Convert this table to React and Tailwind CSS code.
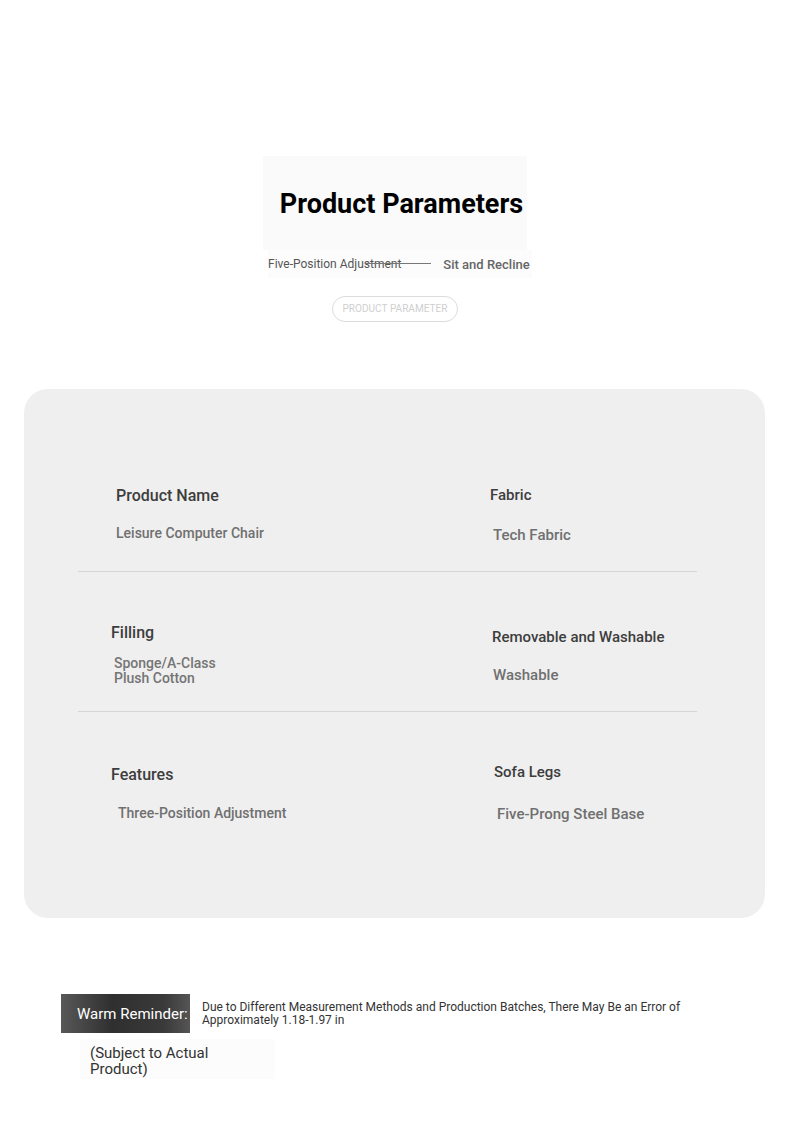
import React from 'react';

const rows = [
  {
    h: 'h-[182px]',
    left: { pt: 'pt-[97px]', lx: 'ml-[38px]', vx: 'ml-[38px]', gap: 'mt-[17px]', ls: 'text-[16px]', vs: 'text-[14px]', label: 'Product Name', value: 'Leisure Computer Chair' },
    right: { pt: 'pt-[96px]', lx: 'ml-0', vx: 'ml-[3px]', gap: 'mt-[20px]', ls: 'text-[15px]', vs: 'text-[15px]', label: 'Fabric', value: 'Tech Fabric' },
  },
  {
    h: 'h-[139px]',
    left: { pt: 'pt-[51px]', lx: 'ml-[33px]', vx: 'ml-[36px]', gap: 'mt-[13px]', ls: 'text-[16px]', vs: 'text-[14px]', label: 'Filling', value: 'Sponge/A-Class Plush Cotton', wrap: true },
    right: { pt: 'pt-[55px]', lx: 'ml-[2px]', vx: 'ml-[3px]', gap: 'mt-[18px]', ls: 'text-[15px]', vs: 'text-[15px]', label: 'Removable and Washable', value: 'Washable' },
  },
  {
    h: 'h-[206px]',
    left: { pt: 'pt-[53px]', lx: 'ml-[33px]', vx: 'ml-[40px]', gap: 'mt-[18px]', ls: 'text-[16px]', vs: 'text-[14px]', label: 'Features', value: 'Three-Position Adjustment' },
    right: { pt: 'pt-[50px]', lx: 'ml-[4px]', vx: 'ml-[7px]', gap: 'mt-[22px]', ls: 'text-[15px]', vs: 'text-[15px]', label: 'Sofa Legs', value: 'Five-Prong Steel Base' },
  },
];

const Cell = ({ c }) => (
  <div className={c.pt}>
    <div className={`${c.lx} ${c.ls} leading-[20px] font-medium text-[#3d3d3d]`}>{c.label}</div>
    {c.wrap ? (
      <div className={`${c.vx} ${c.gap} w-[120px] ${c.vs} leading-[15px] font-medium text-[#757575]`}>{c.value}</div>
    ) : (
      <div className={`${c.vx} ${c.gap} ${c.vs} leading-[20px] font-medium text-[#707070]`}>{c.value}</div>
    )}
  </div>
);

export default function App() {
  return (
    <div className="w-[790px] min-h-[1124px] bg-white font-['Roboto',sans-serif] pt-[156px]">
      <div className="mx-auto w-[264px] h-[94px] bg-[#fafafa] pt-[32px] text-center">
        <h1 className="text-[27px] leading-[33px] font-bold text-black ml-[13px]">Product Parameters</h1>
      </div>
      <div className="flex items-center ml-[268px] h-[28px] bg-[#fcfcfc] w-[264px]">
        <span className="-mt-[1px] text-[12px] leading-[16px] text-[#555]">Five-Position Adjustment</span>
        <span className="-ml-[35px] -mt-[1px] w-[65px] h-px bg-[#777]" />
        <span className="ml-[12px] mt-[2px] text-[13px] leading-[16px] font-medium text-[#666]">Sit and Recline</span>
      </div>
      <div className="mt-[18px] ml-[332px] w-[126px] h-[26px] rounded-full border border-[#dcdcdc] flex items-center justify-center">
        <span className="text-[10px] leading-[12px] text-[#cfcfcf] tracking-[0.05px]">PRODUCT PARAMETER</span>
      </div>

      <div className="mt-[67px] mx-[24px] w-[741px] h-[529px] rounded-[24px] bg-[#efefef]">
        <div className="ml-[54px] w-[619px]">
          {rows.map((r, i) => (
            <div key={i}>
              {i > 0 && <div className="h-px bg-[#d6d6d6]" />}
              <div className={`grid grid-cols-[412px_1fr] ${r.h}`}>
                <Cell c={r.left} />
                <Cell c={r.right} />
              </div>
            </div>
          ))}
        </div>
      </div>

      <div className="mt-[76px] ml-[61px] flex items-start">
        <div className="w-[129px] h-[39px] flex items-center pl-[16px] bg-[linear-gradient(90deg,#585858,#2f2f2f_40%,#3a3a3a_80%,#555)]">
          <span className="text-[15px] leading-[18px] text-white whitespace-nowrap">Warm Reminder:</span>
        </div>
        <div className="ml-[12px] mt-[7px] w-[520px] text-[12px] leading-[13px] text-[#333]">
          Due to Different Measurement Methods and Production Batches, There May Be an Error of Approximately 1.18-1.97 in
        </div>
      </div>
      <div className="mt-[6px] ml-[80px] w-[195px] h-[40px] bg-[#fcfcfc] pl-[10px] pt-[6px]">
        <div className="w-[140px] text-[15px] leading-[16px] text-[#333]">(Subject to Actual Product)</div>
      </div>
    </div>
  );
}
